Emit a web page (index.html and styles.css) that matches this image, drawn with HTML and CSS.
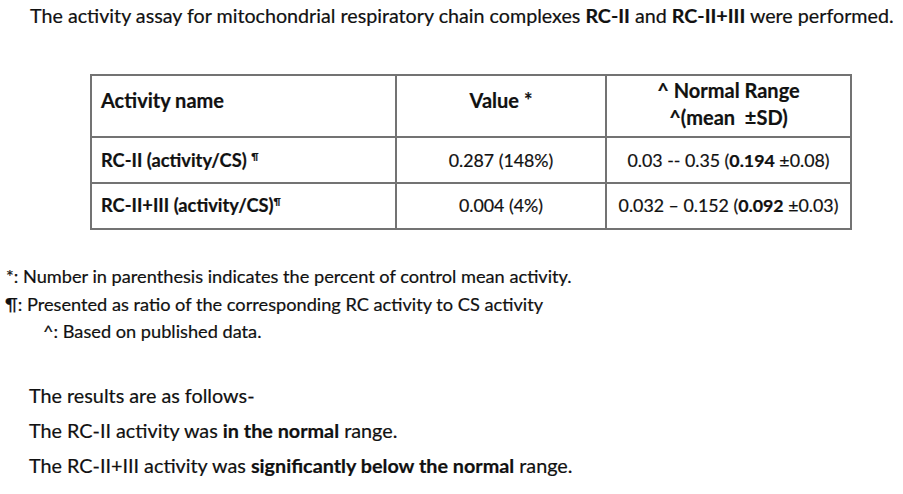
FILE: index.html
```html
<!DOCTYPE html>
<html>
<head>
<meta charset="utf-8">
<link rel="stylesheet" href="styles.css">
</head>
<body>
<p class="title">The activity assay for mitochondrial respiratory chain complexes <b>RC-II</b> and <b>RC-II+III</b> were performed.</p>
<table class="assay">
  <tr class="head">
    <th class="c-name">Activity name</th>
    <th class="c-val">Value *</th>
    <th class="c-range two">^ Normal Range<br>^(mean &nbsp;±SD)</th>
  </tr>
  <tr class="r1">
    <td class="c-name b">RC-II (activity/CS) <sup>¶</sup></td>
    <td class="c-val">0.287 (148%)</td>
    <td class="c-range">0.03 -- 0.35 (<b>0.194</b> ±0.08)</td>
  </tr>
  <tr class="r2">
    <td class="c-name b">RC-II+III (activity/CS)<sup>¶</sup></td>
    <td class="c-val">0.004 (4%)</td>
    <td class="c-range">0.032 – 0.152 (<b>0.092</b> ±0.03)</td>
  </tr>
</table>
<div class="notes">
  <p class="n1">*: Number in parenthesis indicates the percent of control mean activity.</p>
  <p class="n2">¶: Presented as ratio of the corresponding RC activity to CS activity</p>
  <p class="n3">^: Based on published data.</p>
</div>
<div class="results">
  <p>The results are as follows-</p>
  <p>The RC-II activity was <b>in the normal</b> range.</p>
  <p>The RC-II+III activity was <b>significantly below the normal</b> range.</p>
</div>
</body>
</html>
```
FILE: styles.css
```css
html, body {
  margin: 0;
  padding: 0;
  background: #ffffff;
}
body {
  padding-top: 2px;
  font-family: Lato, "Open Sans", sans-serif;
  color: #111111;
  -webkit-text-stroke: 0.2px #111111;
}
p { margin: 0; }
b { font-weight: 700; }

.title {
  padding-left: 30px;
  font-size: 19.7px;
  line-height: 28px;
  white-space: nowrap;
}

.assay {
  margin-top: 44px;
  margin-left: 90px;
  border-collapse: collapse;
  table-layout: fixed;
  width: 762px;
}
.assay th, .assay td {
  border: 2px solid #737373;
  padding: 0 10px;
  vertical-align: middle;
  line-height: 27px;
  font-size: 17.8px;
  white-space: nowrap;
}
.assay th {
  font-size: 20px;
  font-weight: 700;
  padding-bottom: 12px;
}
.assay .c-name { width: 284px; text-align: left; padding-left: 9px; }
.assay .c-val { width: 188px; text-align: center; }
.assay .c-range { text-align: center; }
.assay td.b { font-weight: 700; font-size: 18.3px; }
.assay th.two { padding-bottom: 4px; }
.head { height: 62px; }
.r1, .r2 { height: 46px; }
.r2 td { padding-bottom: 1px; }
.assay sup {
  font-size: 10px;
  vertical-align: 7px;
  line-height: 0;
}

.notes {
  margin-top: 33px;
  font-size: 18.2px;
  line-height: 27.5px;
}
.notes .n1 { padding-left: 6px; }
.notes .n2 { padding-left: 5px; }
.notes .n3 { padding-left: 43px; }

.results {
  margin-top: 32px;
  padding-left: 29px;
  font-size: 19.8px;
  line-height: 35px;
}
```
